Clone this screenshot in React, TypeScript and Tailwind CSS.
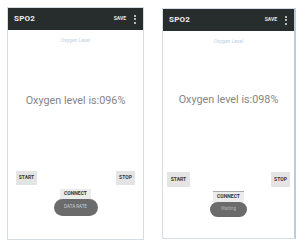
import React from "react";

type P = {
  value: string;
  pill: string;
  left: boolean;
};

function Dots() {
  return (
    <div className="flex flex-col gap-[1.5px]">
      <div className="w-[2px] h-[2px] bg-[#e8e8e8] rounded-full" />
      <div className="w-[2px] h-[2px] bg-[#e8e8e8] rounded-full" />
      <div className="w-[2px] h-[2px] bg-[#e8e8e8] rounded-full" />
    </div>
  );
}

function Phone({ value, pill, left }: P) {
  return (
    <div
      className={
        left
          ? "w-[137px] h-[233px] border border-[#d4dde6] flex flex-col bg-white"
          : "w-[134px] h-[231px] mt-[1px] border border-[#d4dde6] border-r-2 border-r-[#b8cde0] flex flex-col bg-white"
      }
    >
      <div className="h-[22px] bg-[#272d2c] flex items-center pl-[6px] pr-[7px]">
        <span className="text-[8px] font-bold text-[#f0f0f0] tracking-[0.2px]">SPO2</span>
        <div className="flex-1" />
        <span className="text-[5px] font-bold text-[#e6e6e6] mr-[8px]">SAVE</span>
        <Dots />
      </div>
      <div className="mt-[7px] text-center text-[5px] leading-[6px] text-[#bcd0e4]">Oxygen Level</div>
      <div
        className={
          left
            ? "mt-[51px] text-center text-[10.8px] leading-[14px] text-[#858585]"
            : "mt-[49px] text-center text-[10.8px] leading-[14px] text-[#858585]"
        }
      >
        {value}
      </div>
      <div className={left ? "mt-[63px] flex justify-between px-[8px]" : "mt-[65px] flex justify-between pl-[4px] pr-[4px]"}>
        <div className={left ? "w-[21px] h-[14px] bg-[#e4e4e4] flex items-center justify-center text-[5px] font-bold text-[#3a3a3a]" : "w-[23px] h-[15px] bg-[#e4e4e4] flex items-center justify-center text-[5px] font-bold text-[#3a3a3a]"}>
          START
        </div>
        <div className={left ? "w-[19px] h-[14px] bg-[#e4e4e4] flex items-center justify-center text-[5px] font-bold text-[#3a3a3a]" : "w-[19px] h-[15px] bg-[#e4e4e4] flex items-center justify-center text-[5px] font-bold text-[#3a3a3a]"}>
          STOP
        </div>
      </div>
      <div className="flex flex-col items-center">
        <div className={left ? "mt-[4px] w-[31px] h-[10px] bg-[#ececec] flex items-center justify-center text-[5px] font-bold text-[#333]" : "mt-[4px] w-[31px] h-[11px] bg-[#ececec] border-t border-[#aaa] flex items-center justify-center text-[5px] font-bold text-[#333]"}>
          CONNECT
        </div>
        <div className={left ? "w-[44px] h-[17px] rounded-full bg-[#6b6b6b] flex items-center justify-center text-[4.5px] text-[#d0d0d0]" : "w-[37px] h-[15px] rounded-full bg-[#6b6b6b] flex items-center justify-center text-[4.5px] text-[#b8b8b8]"}>
          {pill}
        </div>
      </div>
    </div>
  );
}

export default function App() {
  return (
    <div
      className="w-[304px] h-[246px] bg-white flex pt-[7px] pl-[7px] gap-[18px]"
      style={{ fontFamily: "Roboto, 'Liberation Sans', sans-serif" }}
    >
      <Phone value="Oxygen level is:096%" pill="DATA RATE" left={true} />
      <Phone value="Oxygen level is:098%" pill="Waiting" left={false} />
    </div>
  );
}
